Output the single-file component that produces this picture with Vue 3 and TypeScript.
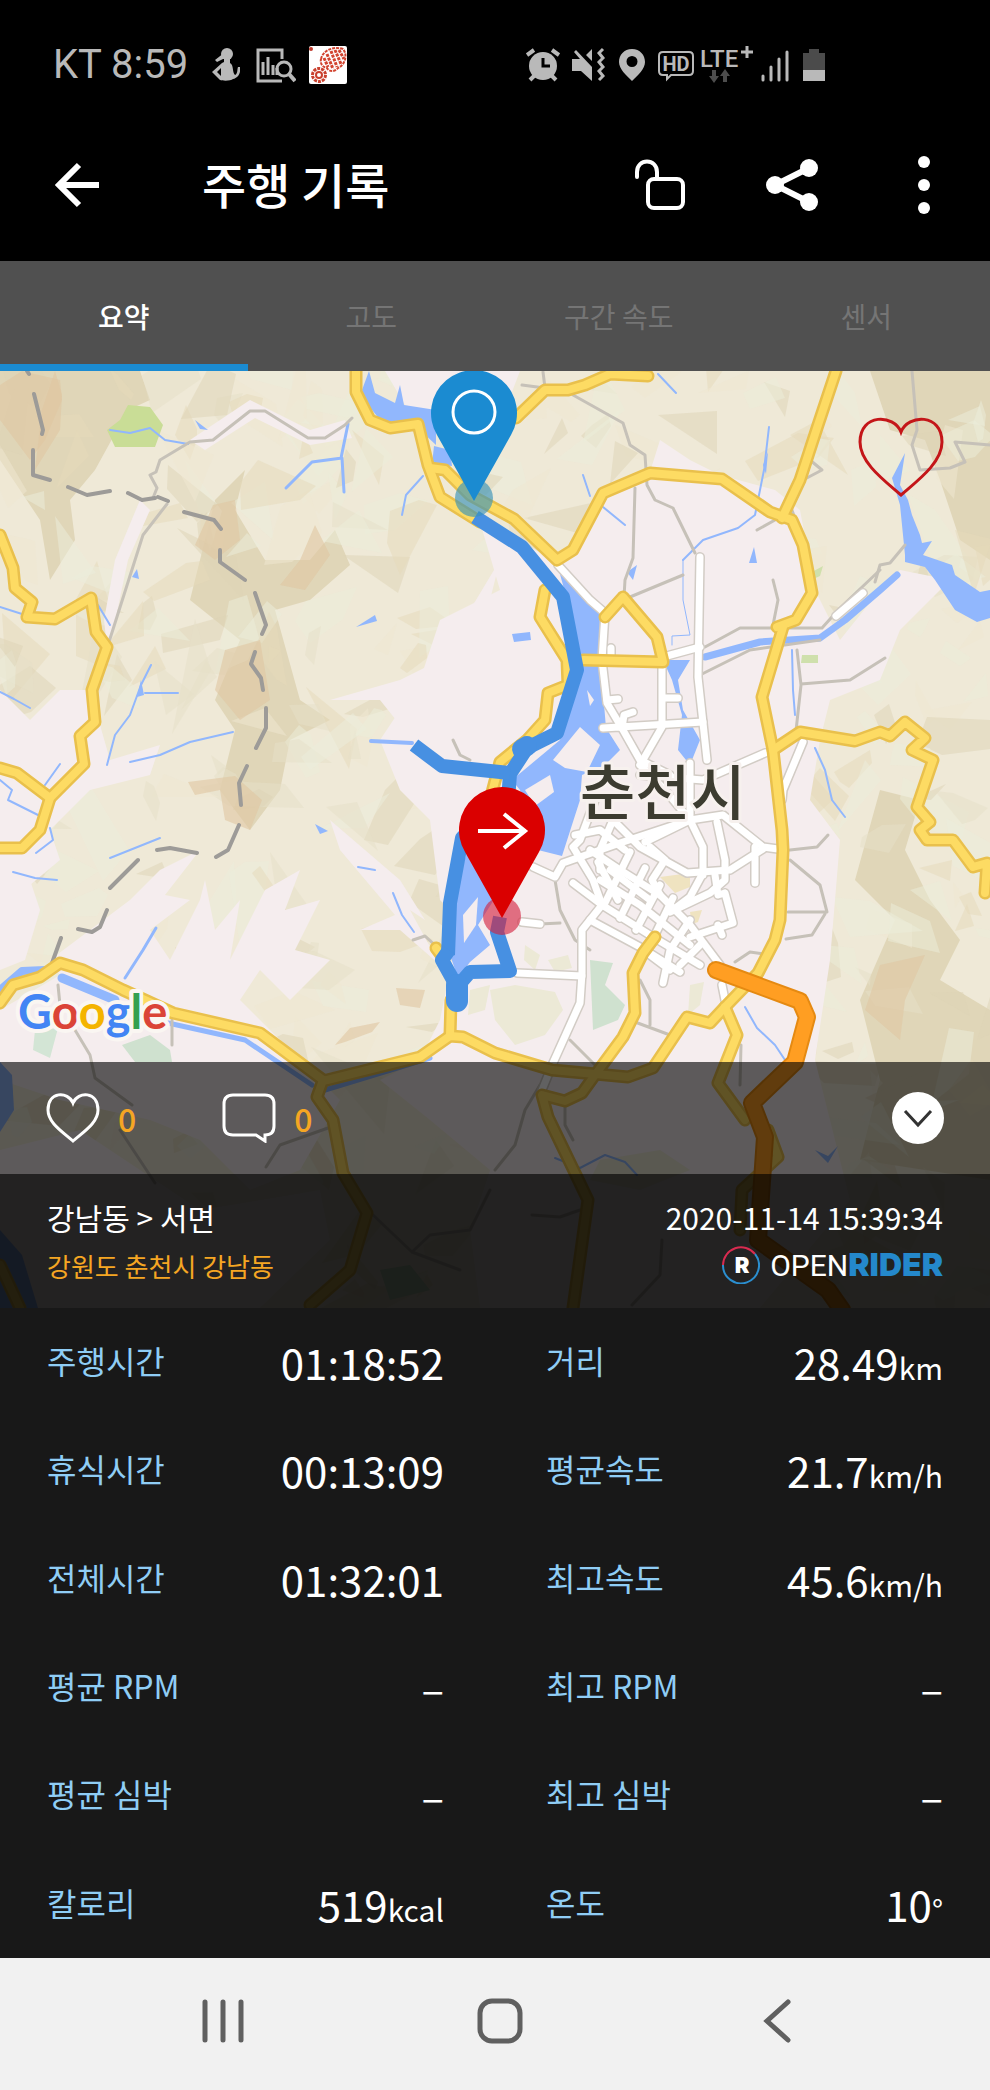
<script setup lang="ts">
import { ref } from 'vue'

interface Stat {
  label: string
  value: string
  unit?: string
}

interface Facet {
  points: string
  fill: string
}

const tabs = ['요약', '고도', '구간 속도', '센서']
const activeTab = ref(0)

const stats: Stat[] = [
  { label: '주행시간', value: '01:18:52' },
  { label: '거리', value: '28.49', unit: 'km' },
  { label: '휴식시간', value: '00:13:09' },
  { label: '평균속도', value: '21.7', unit: 'km/h' },
  { label: '전체시간', value: '01:32:01' },
  { label: '최고속도', value: '45.6', unit: 'km/h' },
  { label: '평균 RPM', value: '–' },
  { label: '최고 RPM', value: '–' },
  { label: '평균 심박', value: '–' },
  { label: '최고 심박', value: '–' },
  { label: '칼로리', value: '519', unit: 'kcal' },
  { label: '온도', value: '10', unit: '°' },
]

// Hill shading: seeded irregular polygons scattered over the map area.
function makeFacets(count: number): Facet[] {
  let seed = 20201114
  const rand = (): number => {
    seed = (seed * 1103515245 + 12345) % 2147483648
    return seed / 2147483648
  }
  const fills = ['#ded4b6', '#e5dfc8', '#ebeedb', '#f0e8d2', '#e5d9ba', '#ecedd9']
  return Array.from({ length: count }, () => {
    const cx = rand() * 990
    const cy = 371 + rand() * 937
    const size = 14 + rand() * 34
    const lean = rand() * Math.PI
    const corners = 3 + Math.floor(rand() * 3)
    const points = Array.from({ length: corners }, (_, i) => {
      const a = (i / corners) * Math.PI * 2 + rand()
      const r = size * (0.5 + rand() * 0.6)
      const u = Math.cos(a) * r * 1.3
      const v = Math.sin(a) * r * 0.6
      const x = cx + u * Math.cos(lean) - v * Math.sin(lean)
      const y = cy + u * Math.sin(lean) + v * Math.cos(lean)
      return `${Math.round(x)},${Math.round(y)}`
    }).join(' ')
    return { points, fill: fills[Math.floor(rand() * fills.length)] }
  })
}
const facets = makeFacets(460)

const ridges = [
  '0,371 140,371 150,400 128,410 95,470 70,500 75,540 50,580 40,520 0,460',
  '215,500 245,470 235,510 265,560 310,560 335,530 350,565 310,600 275,610 300,700 330,720 290,740 280,790 250,830 220,790 235,730 215,700 240,640 190,600',
  '870,371 990,371 990,560 960,540 940,480 925,440 890,430',
  '880,790 920,800 905,850 930,900 960,940 940,980 990,1010 990,1180 860,1160 880,1080 860,1000 895,920 855,880',
]
const browns = [
  '0,385 22,371 60,380 62,400 45,440 30,460 0,420',
  '55,371 62,395 60,430 35,470 42,410',
  '213,505 235,500 240,540 215,560 195,545',
  '300,560 315,525 330,555 305,590 280,585',
  '225,650 260,640 270,700 240,720 215,690',
  '188,782 235,776 262,800 250,830 225,820 220,790 195,795',
  '880,965 925,955 905,1000 900,1040 865,1010',
  '396,988 425,990 420,1008 400,1005',
  '335,1045 350,1028 380,1022 372,1032 345,1042',
]
const lowlands = [
  '430,371 520,371 505,410 470,400 440,415 405,405 385,371',
  '480,522 555,560 575,545 600,495 650,472 660,440 690,460 720,475 775,490 800,510 815,590 840,640 880,590 900,570 950,580 900,630 880,680 830,700 820,740 810,800 840,840 830,960 815,1060 850,1200 760,1308 480,1308 470,1230 490,1170 430,1120 380,1080 420,1060 440,1020 460,920 440,900 430,820 400,790 380,740 420,680 440,620 500,590',
  '108,655 128,560 150,510 140,500 115,560 104,620',
  '190,440 250,400 310,430 345,420 352,438 310,445 255,418 205,450',
  '0,690 30,720 60,690 90,690 110,760 160,745 150,775 90,790 50,830 60,860 0,910',
  '0,900 30,880 40,910 25,960 0,970',
  '50,960 90,930 130,900 160,870 200,850 165,895 190,900 150,930 170,960 200,900 205,880 215,930 240,900 230,960 265,890 300,870 285,910 320,900 295,950 330,960 290,1000 260,970 240,1000 300,1060 340,1100 300,1170 250,1190 200,1140 150,1120 60,1100 0,1080 0,1010 60,975',
  '330,820 400,880 425,920 410,910 440,965 400,930 360,930 395,915 340,850',
  '0,1150 80,1130 200,1210 320,1190 330,1240 260,1308 0,1308',
  '400,680 440,660 500,560 480,640 460,740 420,750 380,700 330,700',
  '120,930 170,965 230,1010 160,1000 100,970',
]
const lowHills = [
  '490,990 515,985 555,992 563,1010 545,1035 515,1045 495,1020',
  '525,945 540,955 535,970 524,960',
  '690,985 704,982 700,1005 688,1015',
  '548,960 568,955 572,968 555,972',
  '470,990 490,985 485,1010 468,1015',
  '600,1160 660,1150 690,1170 640,1190 590,1180',
]
const greens = [
  { points: '128,405 150,407 163,425 155,447 115,447 107,430 120,420', fill: '#c9dd96' },
  { points: '582,615 592,640 588,655 580,650', fill: '#c5dba5' },
  { points: '590,960 613,963 605,985 625,1005 618,1020 593,1030', fill: '#cfe1cf' },
  { points: '122,1045 150,1035 170,1050 172,1062 135,1062', fill: '#cfe1cf' },
  { points: '35,1030 58,1028 50,1058 33,1050', fill: '#d3e5d5' },
  { points: '802,655 818,655 818,663 801,663', fill: '#cfe0ac' },
  { points: '812,572 823,566 820,576 811,580', fill: '#cfe0ac' },
  { points: '660,877 690,873 690,887 675,893', fill: '#efe3c0' },
  { points: '690,912 702,910 698,922 692,924', fill: '#efe3c0' },
  { points: '380,1270 410,1265 430,1290 390,1300', fill: '#bcd8bd' },
]
const waters = [
  '369,371 375,393 395,403 400,385 404,405 436,410 436,445 418,428 385,426 368,405 362,390',
  '434,446 450,450 452,466 432,464',
  '556,560 602,613 602,680 606,728 620,750 605,765 582,775 580,800 562,856 538,850 520,790 512,780 560,740 576,680 570,610',
  '468,848 492,850 500,890 478,925 490,945 470,962 458,978 450,955 452,905',
  '905,453 900,485 908,500 912,515 920,535 922,543 932,541 923,555 952,565 955,575 980,592 990,590 990,618 977,622 955,610 935,580 925,567 905,562 905,555 900,505 892,478',
  '663,660 690,660 678,680 683,710 700,740 690,765 678,750 682,715 672,680',
  '0,1062 12,1075 14,1110 0,1132',
  '0,1230 22,1255 38,1308 0,1308',
  '512,634 530,632 531,640 514,642',
  '356,627 375,615 377,621',
  '630,570 637,565 633,580 627,572',
  '749,563 754,547 757,563',
  '763,465 768,452 766,474',
  '132,577 137,569 139,579',
  '815,1150 828,1156 838,1146 828,1163',
  '141,680 144,695 137,697',
  '195,420 208,430 200,429',
  '315,824 328,831 320,834',
]
const islands = [
  '553,760 580,727 600,745 587,772 565,768',
  '525,790 550,775 554,792 535,806',
  '463,915 478,897 476,925 464,943',
  '587,690 594,700 590,706',
  '640,745 665,735 680,760 650,765',
]
const streams = [
  { d: 'M286 488 L312 462 L342 458 L344 492 M341 458 L348 424', w: 3 },
  { d: 'M110 430 L130 433 L150 428 L165 440 L188 444', w: 2 },
  { d: 'M402 515 L406 495 L423 476', w: 2 },
  { d: 'M151 665 L141 685 L130 715 L115 735 L107 765 M145 693 L178 693', w: 2 },
  { d: 'M0 607 L22 614 M98 605 L110 625', w: 2 },
  { d: 'M0 692 L14 699 L30 708', w: 2 },
  { d: 'M130 762 L160 755 L190 742 L233 732', w: 2 },
  { d: 'M45 785 L60 764 M0 780 L12 790 L8 800 L38 815 M50 828 L53 840 L36 853', w: 2 },
  { d: 'M13 872 L35 878 L57 880 M110 858 L160 838', w: 2 },
  { d: 'M156 928 L143 950 L125 978', w: 3 },
  { d: 'M358 867 L375 870 M393 893 L402 915 L414 932', w: 2 },
  { d: 'M371 741 L412 743', w: 4 },
  { d: 'M658 374 L676 393 M583 475 L590 496 M603 507 L625 525', w: 2 },
  { d: 'M769 427 L764 470 L755 515 L738 528 L703 540 L683 560', w: 2 },
  { d: 'M683 560 L683 600 L690 635 L672 636 L672 645', w: 1 },
  { d: 'M705 657 L760 642 L820 638 L845 620 L880 590 L897 575', w: 7 },
  { d: 'M792 650 L793 690 L795 715', w: 2 },
  { d: 'M815 748 L825 770 L832 800 L845 817 M745 1007 L757 1028 L775 1045 L785 1060', w: 2 },
  { d: 'M0 990 L22 971 L45 970', w: 8 },
  { d: 'M62 978 L115 1000', w: 9 },
  { d: 'M168 1023 L245 1040 L312 1085', w: 5 },
  { d: 'M325 1090 L430 1058', w: 5 },
  { d: 'M555 1158 L580 1168 L605 1155 L625 1162 L637 1175', w: 2 },
]
const minorRoads = [
  'M352 418 L345 425 L325 438 L308 438 L265 411 L250 411 L213 440 L190 442 L160 460 L156 472 L150 475 L157 488 L153 498 M167 504 L143 535 L108 645',
  'M573 395 L623 423 L630 445 L645 455 L647 485 L655 500 L673 508 L695 553',
  'M635 488 L633 558 L625 580 L624 597 M630 597 L683 575',
  'M522 385 L560 390 M543 372 L545 388',
  'M912 371 L917 430 L912 445 L920 470 L950 468 L965 462 L955 442 L990 445',
  'M818 425 L810 460 L822 470 L803 480',
  'M790 505 L805 545 L809 580 M757 530 L775 520',
  'M773 580 L778 600 L773 625',
  'M875 582 L880 565 L890 563 L905 545',
  'M705 647 L740 628 L822 628 L840 608 L880 570 M700 675 L750 650 L820 640',
  'M797 650 L801 685 L795 740 M801 684 L850 680 L885 658',
  'M453 740 L460 755 L470 760',
  'M555 880 L560 910 L575 940 L590 950 M520 925 L560 923',
  'M790 850 L817 847 L828 835 M790 860 L820 885 L827 912 L788 912 M825 914 L812 935 L786 939',
  'M58 985 L60 1005 M75 1030 L90 1055 L95 1078 L132 1105 M120 1130 L155 1183',
  'M172 1020 L172 1045',
  'M413 940 L425 936 L438 948',
  'M640 980 L650 1000 L650 1025 M570 1040 L595 1065 M635 1022 L670 1035',
  'M735 962 L750 952 L770 955',
  'M540 1085 L525 1110 L515 1145 L495 1170',
  'M328 1128 L280 1145 L266 1167',
  'M565 1105 L565 1125 L573 1140',
  'M373 1215 L412 1252 L430 1235 L470 1230 L490 1190 M412 1252 L460 1270',
  'M532 1215 L560 1217 L580 1210 M662 1240 L660 1275 L632 1305',
  'M741 1045 L740 1085',
]
const whiteRoads = [
  'M558 565 L590 600 L605 613 L602 660 L607 703 L623 730 L640 760 L670 775',
  'M700 557 L698 677 L707 760',
  'M662 667 L662 727 L640 765 M664 698 L678 698',
  'M603 728 L703 722 M622 728 L624 715 L633 712 M607 700 L618 699',
  'M663 657 L700 647 M611 658 L611 648',
  'M836 616 L863 593',
  'M765 753 L703 780 L640 775 M803 742 L783 790 L782 800',
  'M690 763 L690 820 L703 847 L703 875 M640 765 L665 790 L690 820',
  'M533 867 L555 877 L563 863 L620 843 L690 820 L723 815 L763 847 L778 849',
  'M613 820 L640 847 L687 873 L730 870 L763 849 M755 847 L755 883',
  'M573 847 L580 840 L595 800 M573 847 L593 880 L602 905 L582 930 L582 973 L580 1003 L553 1063 L542 1090',
  'M573 883 L602 905 L653 937 L700 965',
  'M590 920 L640 947 L680 972',
  'M517 973 L582 976 M522 922 L540 924',
  'M590 850 L620 870 L660 895 L690 925 L720 965',
  'M600 880 L640 905 L690 945 M610 870 L650 900',
  'M575 835 L600 830 L625 850 M613 820 L600 850 L600 870',
  'M598 862 L618 900 M630 852 L604 905 M645 868 L620 918 M660 885 L636 930 M673 898 L650 945',
  'M650 847 L665 860 L652 880 L660 895 M690 820 L645 842',
  'M717 822 L725 860 L725 880 L710 893 L670 912 M703 873 L690 897 L670 912',
  'M725 893 L733 923 L690 937 M718 925 L722 935 M715 875 L718 895 L725 893',
  'M690 920 L670 950 L663 983 M650 955 L670 970 M700 945 L680 965',
  'M722 985 L725 1000',
]
const yellowRoads = [
  'M0 535 L13 568 L15 588 L32 602 L27 617 L55 619 L91 598 L96 632 L107 647 L92 690 L95 722 L80 736 L84 764 L62 786 L50 798 L40 830 L22 848 L0 848',
  'M0 768 L17 773 L50 798',
  'M356 371 L356 392 L370 420 L390 428 L418 424 L428 465 L440 497 L480 522',
  'M430 468 L445 470 L470 495 L514 519 L557 560 L573 550 L603 493 L650 473 L722 479 L770 512 L792 520 L803 545 L812 593 L796 620 L777 627',
  'M836 371 L818 425 L800 480 L782 518',
  'M516 418 L545 390 L568 390 L585 385 L610 374 L648 376',
  'M783 627 L762 697 L773 750 L782 830 L783 850 L780 920 L775 940 L758 973 L725 1007 L710 1023 L687 1017 L653 1068 L628 1077 L552 1070 L495 1053 L463 1037 L450 1036 L420 1057 L323 1081',
  'M773 750 L800 732 L855 741 L880 732 L890 736 L905 722 L925 738 L912 750 L933 760 L917 807 L930 822 L920 830 L927 840 L953 840 L973 867 L987 863 L985 893',
  'M545 590 L540 617 L567 660 L568 685 L548 693 L545 720 L527 740 L500 762 L490 800',
  'M583 660 L663 662 L657 637 L623 597 L605 617',
  'M0 1003 L13 985 L40 977 L60 963 L83 970 L123 990 L173 1013 L260 1033 L323 1080 L317 1097 L333 1120 L343 1173 L367 1213 L350 1270 L310 1305',
  'M450 1036 L451 1000',
  'M655 937 L643 953 L633 973 L635 1013 L623 1037 L595 1075 L582 1093 L565 1101 L542 1095 L548 1117 L588 1200 L573 1308',
  'M725 1007 L737 1035 L718 1083 L745 1120 M768 1130 L778 1157 L742 1190 L740 1230',
  'M0 1265 L20 1308',
  'M436 948 L442 956',
]
const borderDashes =
  'M27 371 L29 374 M34 394 L43 430 L42 434 M33 450 L33 475 L50 480 M68 487 L87 495 L110 491 M128 493 L142 500 L155 498 M158 497 L168 501 M184 512 L214 520 L221 529 M220 550 L220 562 L245 580 M255 593 L266 625 L262 634 M255 652 L251 664 L261 678 L263 690 M266 708 L266 728 L256 748 M247 766 L239 783 L241 805 M239 825 L228 850 L216 857 M197 853 L170 848 L157 850 M138 860 L125 873 L110 888 M107 910 L100 927 L92 932 L78 929 M61 938 L52 963'
const orangeRoad =
  'M716 970 L800 1001 L807 1017 L795 1062 L752 1103 L765 1137 L758 1240 L828 1290 L842 1310'
</script>

<template>
  <main class="screen">
    <header class="top">
      <div class="status">
        <span class="carrier">KT 8:59</span>
        <svg class="ic person" viewBox="0 0 28 40" width="28" height="40">
          <circle cx="15" cy="9" r="6" />
          <path d="M12 8 L3 15 L5 17 L13 13 Z" />
          <path d="M12 13 H18 V18 C22 20 20 27 23 30 C26 29 25 24 26 22 H28 C29 28 26 33 21 34 C19 36 11 36 8 35 L0 27 L10 18 L12 17 Z M5 27 L9 31 L9 23 Z" fill-rule="evenodd" />
        </svg>
        <svg class="ic chart" viewBox="0 0 40 40" width="40" height="40">
          <path d="M26 14 V5 H2 V36 H26" fill="none" stroke="#b9b9b9" stroke-width="3" />
          <path d="M7 30 V17 M12 30 V12 M17 30 V20 M21 30 V23" fill="none" stroke="#b9b9b9" stroke-width="3" />
          <circle cx="28" cy="24" r="7" fill="none" stroke="#b9b9b9" stroke-width="3" />
          <path d="M33 29 L39 36" stroke="#b9b9b9" stroke-width="4" />
        </svg>
        <svg class="ic" viewBox="0 0 40 40" width="40" height="40">
          <rect x="1" y="1" width="38" height="38" rx="2" fill="#fff" />
          <circle cx="3" cy="4" r="2" fill="#c0392b" />
          <path d="M13 14 C15 5 26 1 35 4 C40 10 37 20 30 23 C27 27 21 27 19 23 C14 22 12 18 13 14 Z" fill="none" stroke="#d2432f" stroke-width="2" stroke-dasharray="3 1" />
          <path d="M16 13 L20 22 M19 9 L25 24 M23 6 L29 22 M27 5 L33 19 M31 5 L36 14" stroke="#d2432f" stroke-width="3" stroke-dasharray="3 1" />
          <circle cx="11" cy="30" r="6.500" fill="none" stroke="#c9402e" stroke-width="3" stroke-dasharray="3 1" />
          <circle cx="11" cy="30" r="3" fill="none" stroke="#c9402e" stroke-width="2" />
        </svg>
        <div class="signals">
          <svg class="ic" viewBox="0 0 34 40" width="34" height="40">
            <circle cx="17" cy="21" r="14" />
            <path d="M1 10 L8 5 M33 10 L26 5 M4 35 L9 30 M30 35 L25 30" stroke="#b9b9b9" stroke-width="4" />
            <path d="M17 13 V21 H24" fill="none" stroke="#000" stroke-width="3" />
          </svg>
          <svg class="ic" viewBox="0 0 34 40" width="34" height="40">
            <path d="M0 14 H8 L2 7 L4 5 L20 22 V36 L9 26 H0 Z M20 4 V16 L14 10 Z" />
            <path d="M31 4 L27 8 L31 13 L27 17 L31 22 L27 26 L31 31 L27 35" fill="none" stroke="#b9b9b9" stroke-width="3" />
          </svg>
          <svg class="ic" viewBox="0 0 28 40" width="28" height="40">
            <path d="M14 4 C6 4 1 10 1 17 C1 24 8 30 14 36 C20 30 27 24 27 17 C27 10 22 4 14 4 Z M14 11 A5.500 5.500 0 1 1 14 22 A5.500 5.500 0 1 1 14 11 Z" fill-rule="evenodd" />
          </svg>
          <svg class="ic" viewBox="0 0 36 40" width="36" height="40">
            <path d="M5 7 H31 Q35 7 35 11 V26 Q35 30 31 30 H13 L9 34 V30 H5 Q1 30 1 26 V11 Q1 7 5 7 Z" fill="none" stroke="#b9b9b9" stroke-width="2" />
            <text x="18" y="26" text-anchor="middle" class="hd">HD</text>
          </svg>
          <svg class="ic" viewBox="0 0 54 40" width="54" height="40">
            <text x="0" y="22" class="lte">LTE</text>
            <path d="M41 7 H53 M47 1 V13" stroke="#b9b9b9" stroke-width="3" />
            <path d="M12 25 H16 V31 H19 L14 38 L9 31 H12 Z M23 37 H27 V31 H30 L25 24 L20 31 H23 Z" fill="#4d4d4d" />
          </svg>
          <svg class="ic" viewBox="0 0 30 40" width="30" height="40">
            <path d="M3 31 V35 M11 22 V35 M19 14 V35 M27 7 V35" stroke="#b9b9b9" stroke-width="3" stroke-linecap="round" />
          </svg>
          <svg class="ic battery" viewBox="0 0 24 40" width="24" height="40">
            <path d="M7 4 H17 V8 H23 V25 H1 V8 H7 Z" fill="#4b4b4b" />
            <path d="M1 25 H23 V36 H1 Z" />
          </svg>
        </div>
      </div>
      <div class="appbar">
        <button class="plain" aria-label="뒤로">
          <svg viewBox="0 0 46 46" width="46" height="46">
            <path d="M45 23 H5 M25 3 L5 23 L25 43" fill="none" stroke="#fff" stroke-width="6" />
          </svg>
        </button>
        <h1>주행 기록</h1>
        <div class="actions">
          <button class="plain" aria-label="잠금 해제">
            <svg viewBox="0 0 52 52" width="52" height="52">
              <rect x="14" y="20" width="35" height="29" rx="6" fill="none" stroke="#fff" stroke-width="4" />
              <path d="M3 18 V13 C3 -1 23 -1 23 13 V20" fill="none" stroke="#fff" stroke-width="4" stroke-linecap="round" />
            </svg>
          </button>
          <button class="plain" aria-label="공유">
            <svg viewBox="0 0 52 52" width="52" height="52">
              <path d="M43 9 L9 26 L43 43" fill="none" stroke="#fff" stroke-width="6" />
              <g fill="#fff"><circle cx="43" cy="9" r="9" /><circle cx="9" cy="26" r="9" /><circle cx="43" cy="43" r="9" /></g>
            </svg>
          </button>
          <button class="plain" aria-label="더 보기">
            <svg viewBox="0 0 12 58" width="12" height="58">
              <g fill="#fff"><circle cx="6" cy="6" r="6" /><circle cx="6" cy="29" r="6" /><circle cx="6" cy="52" r="6" /></g>
            </svg>
          </button>
        </div>
      </div>
    </header>

    <nav class="tabs" role="tablist">
      <button
        v-for="(tab, i) in tabs"
        :key="tab"
        role="tab"
        :aria-selected="i === activeTab"
        :class="{ active: i === activeTab }"
        @click="activeTab = i"
      >
        {{ tab }}
      </button>
    </nav>

    <section class="map">
      <svg class="canvas" viewBox="0 371 990 937" preserveAspectRatio="xMidYMid slice">
        <rect x="0" y="371" width="990" height="937" fill="#efe9d7" />
        <polygon v-for="p in ridges" :key="p" :points="p" fill="#e0d6b8" />
        <polygon v-for="(f, i) in facets" :key="i" :points="f.points" :fill="f.fill" opacity="0.5" />
        <polygon v-for="p in browns" :key="p" :points="p" fill="#dfc7a2" opacity="0.6" />
        <polygon v-for="p in lowlands" :key="p" :points="p" fill="#f5edee" />
        <polygon v-for="p in lowHills" :key="p" :points="p" fill="#ece9d6" />
        <polygon v-for="g in greens" :key="g.points" :points="g.points" :fill="g.fill" />
        <polygon v-for="p in waters" :key="p" :points="p" fill="#91b7fd" />
        <polygon v-for="p in islands" :key="p" :points="p" fill="#f5edee" />
        <g fill="none" stroke-linejoin="round" stroke-linecap="round">
          <path v-for="s in streams" :key="s.d" :d="s.d" :stroke-width="s.w" stroke="#91b7fd" />
          <path v-for="d in minorRoads" :key="d" :d="d" stroke="#c6c1b8" stroke-width="3" />
          <path :d="borderDashes" stroke="#9d9b98" stroke-width="4" />
          <path v-for="d in whiteRoads" :key="d" :d="d" stroke="#d2ccc5" stroke-width="10" />
          <path v-for="d in whiteRoads" :key="d + 'w'" :d="d" stroke="#fff" stroke-width="7" />
          <path v-for="d in yellowRoads" :key="d" :d="d" stroke="#e9c04c" stroke-width="13" />
          <path v-for="d in yellowRoads" :key="d + 'y'" :d="d" stroke="#fddb63" stroke-width="8" />
          <path :d="orangeRoad" stroke="#e58a12" stroke-width="18" />
          <path :d="orangeRoad" stroke="#ff9e22" stroke-width="14" />
        </g>
        <text class="city" x="580" y="815">춘천시</text>
        <g fill="none" stroke="#4790e2" stroke-width="14" stroke-linejoin="round">
          <path d="M475 517 L522 547 L563 597 L577 670 L557 733 L527 748 L510 774 L508 800 L475 825 L462 838 L450 903 L448 955" />
          <path d="M414 745 L442 766 L510 773" />
          <path d="M527 746 L522 749" stroke-width="20" stroke-linecap="round" />
          <path d="M449 950 L442 960 L457 987 L470 972 L510 971 L497 932 L500 917" />
          <path d="M457 985 V1001" stroke-width="22" stroke-linecap="round" />
        </g>
        <circle cx="474" cy="498" r="19" fill="#3b93b8" opacity="0.65" />
        <path d="M474 501 L437 435 A43 43 0 1 1 511 435 Z" fill="#1b8bd1" />
        <circle cx="474" cy="412" r="21" fill="none" stroke="#fff" stroke-width="3" />
        <circle cx="502" cy="916" r="19" fill="#d4213d" opacity="0.62" />
        <path d="M502 918 L465 852 A43 43 0 1 1 539 852 Z" fill="#da0000" />
        <path d="M478 831 H526 M504 814 L525 831 L504 848" fill="none" stroke="#fff" stroke-width="4" />
        <text class="google" x="18" y="1029">
          <tspan fill="#4285f4">G</tspan><tspan fill="#db4437">o</tspan><tspan fill="#f4b400">o</tspan><tspan fill="#4285f4">g</tspan><tspan fill="#34a050">l</tspan><tspan fill="#db4437">e</tspan>
        </text>
      </svg>
      <button class="plain favorite" aria-label="즐겨찾기">
        <svg viewBox="0 0 86 80" width="86" height="80">
          <path d="M43 15 C36 -3 2 -4 2 25 C2 46 27 64 43 78 C59 64 84 46 84 25 C84 -4 50 -3 43 15 Z" fill="none" stroke="#c41619" stroke-width="3" />
        </svg>
      </button>
      <div class="social">
        <button class="plain count">
          <svg viewBox="0 0 54 50" width="54" height="50">
            <path d="M27 10 C22 -2 2 -2 2 17 C2 30 17 39 27 48 C37 39 52 30 52 17 C52 -2 32 -2 27 10 Z" fill="none" stroke="#fff" stroke-width="3" />
          </svg>
          <span>0</span>
        </button>
        <button class="plain count">
          <svg viewBox="0 0 54 50" width="54" height="50">
            <path d="M11 2 H43 Q52 2 52 11 V33 Q52 42 43 42 V48 L34 42 H11 Q2 42 2 33 V11 Q2 2 11 2 Z" fill="none" stroke="#fff" stroke-width="3" />
          </svg>
          <span>0</span>
        </button>
        <button class="plain collapse" aria-label="접기">
          <svg viewBox="0 0 52 52" width="52" height="52">
            <circle cx="26" cy="26" r="26" fill="#fff" />
            <path d="M13 19 L26 33 L39 19" fill="none" stroke="#333" stroke-width="3" />
          </svg>
        </button>
      </div>
      <div class="info">
        <div class="line">
          <strong>강남동 &gt; 서면</strong>
          <time datetime="2020-11-14T15:39:34">2020-11-14 15:39:34</time>
        </div>
        <div class="line">
          <span class="address">강원도 춘천시 강남동</span>
          <span class="brand">
            <svg viewBox="0 0 38 38" width="38" height="38">
              <path d="M1 19 A18 18 0 0 1 33 8" fill="none" stroke="#d92b50" stroke-width="2" />
              <path d="M33 8 A18 18 0 1 1 1 19" fill="none" stroke="#2b8fd0" stroke-width="2" />
              <text x="20" y="27" text-anchor="middle" class="mark">R</text>
            </svg>
            <span class="open">OPEN<b>RIDER</b></span>
          </span>
        </div>
      </div>
    </section>

    <dl class="stats">
      <div v-for="s in stats" :key="s.label" class="stat">
        <dt>{{ s.label }}</dt>
        <dd>{{ s.value }}<small v-if="s.unit">{{ s.unit }}</small></dd>
      </div>
    </dl>

    <footer class="system">
      <button class="plain" aria-label="최근 앱">
        <svg viewBox="0 0 46 46" width="46" height="46">
          <path d="M5 4 V42 M23 4 V42 M41 4 V42" stroke="#606060" stroke-width="5" stroke-linecap="round" />
        </svg>
      </button>
      <button class="plain" aria-label="홈">
        <svg viewBox="0 0 46 46" width="46" height="46">
          <rect x="3" y="3" width="40" height="40" rx="12" fill="none" stroke="#606060" stroke-width="5" />
        </svg>
      </button>
      <button class="plain" aria-label="이전">
        <svg viewBox="0 0 46 46" width="46" height="46">
          <path d="M34 4 L13 23 L34 42" fill="none" stroke="#606060" stroke-width="5" stroke-linecap="round" />
        </svg>
      </button>
    </footer>
  </main>
</template>

<style>
body {
  margin: 0;
  background: #181818;
}
</style>

<style scoped>
.screen {
  display: flex;
  flex-direction: column;
  min-height: 100vh;
  background: #181818;
  color: #fff;
  font-family: "Noto Sans CJK KR", "Noto Sans", sans-serif;
}
svg {
  display: block;
  flex: none;
}
.plain {
  display: flex;
  align-items: center;
  padding: 0;
  border: 0;
  background: none;
  color: inherit;
  font: inherit;
  cursor: pointer;
}
.top {
  background: #000;
}
.status {
  display: flex;
  align-items: center;
  height: 86px;
  padding: 22px 164px 0 53px;
}
.carrier {
  color: #b9b9b9;
  font: 400 40px/48px Roboto, sans-serif;
}
.ic {
  fill: #b9b9b9;
}
.person {
  margin-left: 24px;
}
.chart {
  margin: 0 12px 0 16px;
}
.signals {
  display: flex;
  gap: 12px;
  margin-left: auto;
}
.signals .ic:nth-child(n + 5) {
  margin-left: -6px;
}
.signals .battery:nth-child(n) {
  margin-left: 0;
}
.hd {
  font: 700 20px Roboto, sans-serif;
}
.lte {
  font: 500 24px Roboto, sans-serif;
}
.appbar {
  display: flex;
  align-items: center;
  height: 153px;
  padding: 0 60px 0 54px;
}
h1 {
  margin: 0 0 0 102px;
  padding-bottom: 4px;
  font-size: 48px;
  font-weight: 500;
  line-height: 60px;
}
.actions {
  display: flex;
  align-items: center;
  margin-left: auto;
}
.actions .plain + .plain {
  margin-left: 80px;
}
.actions .plain:last-child {
  margin-left: 100px;
}
.tabs {
  display: grid;
  grid-template-columns: repeat(4, 1fr);
  height: 110px;
  background: #505050;
}
.tabs button {
  padding: 6px 0 0;
  border: 0;
  border-bottom: 7px solid transparent;
  background: none;
  color: #757575;
  font: 400 28px/40px "Noto Sans CJK KR", sans-serif;
  cursor: pointer;
}
.tabs .active {
  border-bottom-color: #1b8bd1;
  color: #fff;
  font-weight: 500;
}
.map {
  position: relative;
  display: flex;
  flex-direction: column;
  justify-content: flex-end;
  aspect-ratio: 990 / 937;
  overflow: hidden;
}
.canvas {
  position: absolute;
  inset: 0;
  width: 100%;
  height: 100%;
}
.city {
  fill: #3c3c30;
  stroke: #f7f1ee;
  stroke-width: 6px;
  stroke-linejoin: round;
  paint-order: stroke;
  font: 500 60px "Noto Sans CJK KR", sans-serif;
}
.google {
  stroke: #faf6f2;
  stroke-width: 8px;
  stroke-linejoin: round;
  paint-order: stroke;
  font: 700 47px Lato, sans-serif;
}
.favorite {
  position: absolute;
  top: 46px;
  right: 46px;
}
.social {
  position: relative;
  display: flex;
  align-items: center;
  gap: 86px;
  height: 112px;
  padding: 0 46px;
  background: rgba(0, 0, 0, 0.62);
}
.count {
  gap: 18px;
  color: #f5a623;
  font-size: 32px;
  font-weight: 500;
  line-height: 44px;
}
.collapse {
  margin-left: auto;
}
.info {
  position: relative;
  display: flex;
  flex-direction: column;
  justify-content: center;
  gap: 4px;
  height: 134px;
  padding: 0 47px;
  background: rgba(0, 0, 0, 0.86);
}
.line {
  display: flex;
  align-items: center;
  justify-content: space-between;
  height: 44px;
  font-size: 30px;
}
.line strong {
  font-weight: 400;
}
.address {
  color: #f5a623;
  font-size: 26px;
}
.brand {
  display: flex;
  align-items: center;
  gap: 10px;
}
.open {
  font: 400 30px/36px Roboto, sans-serif;
}
.open b {
  color: #2488cb;
  font: 900 32px/36px Inter, sans-serif;
}
.mark {
  fill: #fff;
  font: 900 22px Inter, sans-serif;
}
.stats {
  display: grid;
  flex: 1;
  grid-template-columns: 1fr 1fr;
  grid-auto-rows: 1fr;
  column-gap: 102px;
  margin: 0;
  padding: 0 47px;
}
.stat {
  display: flex;
  align-items: center;
  justify-content: space-between;
  min-height: 96px;
}
dt {
  padding-bottom: 4px;
  color: #8fcdf5;
  font-size: 32px;
  line-height: 44px;
}
dd {
  margin: 0;
  font-size: 42px;
  line-height: 60px;
}
small {
  font-size: 30px;
  line-height: 30px;
}
.system {
  display: grid;
  grid-template-columns: repeat(3, 1fr);
  justify-items: center;
  align-items: center;
  height: 132px;
  padding: 0 74px 6px 84px;
  box-sizing: border-box;
  background: #f1f1f1;
}
</style>
